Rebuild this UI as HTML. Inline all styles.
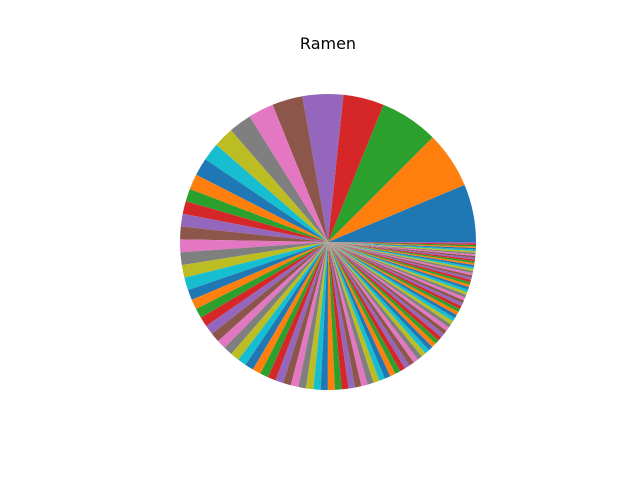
<!DOCTYPE html>
<html><head><meta charset="utf-8"><style>
html,body{margin:0;padding:0;background:#fff;width:640px;height:480px;overflow:hidden}
</style></head><body>
<svg id="s" width="640" height="480" xmlns="http://www.w3.org/2000/svg">
<rect width="640" height="480" fill="#fff"/>
<text x="328" y="49" font-family="DejaVu Sans, sans-serif" font-size="16" text-anchor="middle" fill="#000">Ramen</text>
<g id="g"></g>
</svg>
<script>
var C=["#1f77b4","#ff7f0e","#2ca02c","#d62728","#9467bd","#8c564b","#e377c2","#7f7f7f","#bcbd22","#17becf"];
var b=[0,22.7,45,68,84,100,112,122,131,139,146,153,159,164,169,174,179,184,189,194,199];
var sizes=[];for(var i=1;i<b.length;i++)sizes.push(b[i]-b[i-1]);
var N=85,rem=161,a0=4.2,a1=0.6,tmp=[],sum=0;
for(i=0;i<N;i++){var t=i/(N-1);var v=a1+(a0-a1)*Math.pow(1-t,1.6);tmp.push(v);sum+=v;}
for(i=0;i<N;i++)sizes.push(tmp[i]*rem/sum);
var cx=328,cy=242,r=148,a=0,h="";
for(i=0;i<sizes.length;i++){
 var s=a*Math.PI/180,e=(a+sizes[i])*Math.PI/180;
 var x1=cx+r*Math.cos(s),y1=cy-r*Math.sin(s),x2=cx+r*Math.cos(e),y2=cy-r*Math.sin(e);
 h+='<path d="M'+cx+' '+cy+'L'+x1.toFixed(2)+' '+y1.toFixed(2)+'A'+r+' '+r+' 0 '+(sizes[i]>180?1:0)+' 0 '+x2.toFixed(2)+' '+y2.toFixed(2)+'Z" fill="'+C[i%10]+'"/>';
 a+=sizes[i];
}
document.getElementById("g").innerHTML=h;
</script>
</body></html>
